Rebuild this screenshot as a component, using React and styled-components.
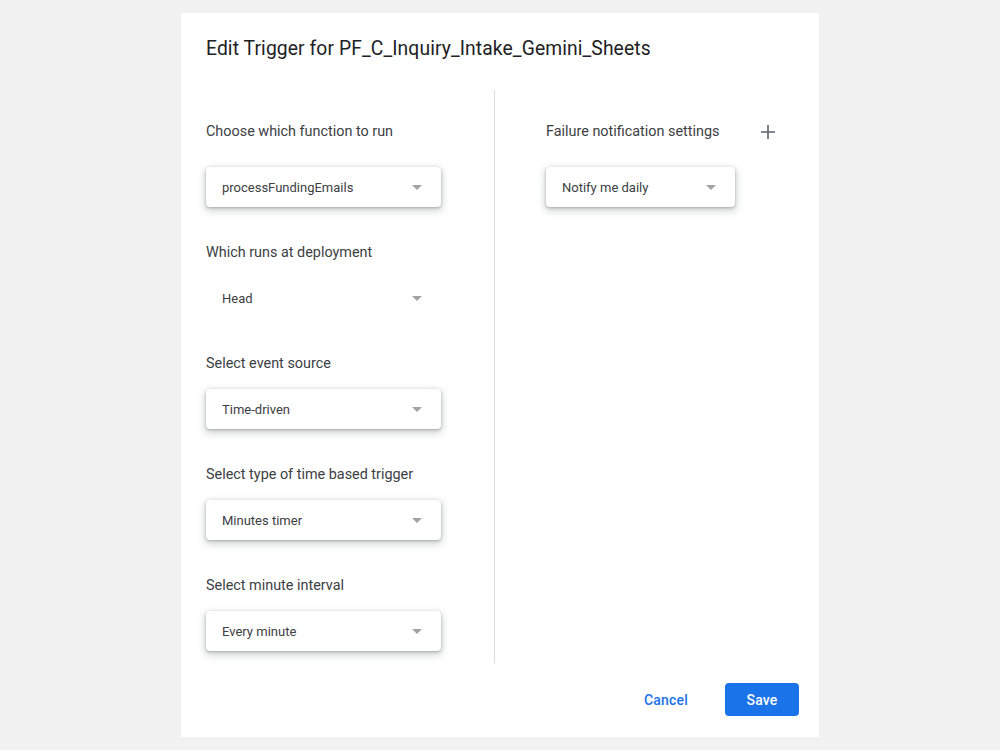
import React from "react";
import styled, { createGlobalStyle } from "styled-components";

const GlobalStyle = createGlobalStyle`
  body {
    margin: 0;
    background: #f1f1f1;
    font-family: Roboto, "Liberation Sans", Arial, sans-serif;
    color: #202124;
  }
`;

const Page = styled.div`
  width: 1000px;
  height: 750px;
  display: flex;
  justify-content: center;
  padding-top: 13px;
  box-sizing: border-box;
`;

const Dialog = styled.div`
  width: 638px;
  height: 724px;
  background: #fff;
  padding: 24px 20px 21px 25px;
  box-sizing: border-box;
  display: flex;
  flex-direction: column;
`;

const Title = styled.h1`
  margin: 0;
  font-size: 19.3px;
  line-height: 24px;
  font-weight: 400;
  color: #202124;
  letter-spacing: 0.1px;
`;

const Body = styled.div`
  display: flex;
  margin-top: 29px;
  height: 573px;
`;

const LeftCol = styled.div`
  width: 289px;
  border-right: 1px solid #dadce0;
  padding-top: 32px;
  box-sizing: border-box;
`;

const RightCol = styled.div`
  flex: 1;
  padding: 32px 23px 0 51px;
`;

const Group = styled.div`
  margin-bottom: 36px;
`;

const LabelRow = styled.div`
  display: flex;
  align-items: center;
  justify-content: space-between;
  height: 20px;
  margin-bottom: ${(p) => p.$gap}px;
`;

const Label = styled.div`
  font-size: 14.4px;
  line-height: 20px;
  color: #3c4043;
`;

const Select = styled.div`
  width: ${(p) => p.$width}px;
  height: 40px;
  box-sizing: border-box;
  border-radius: 4px;
  background: #fff;
  display: flex;
  align-items: center;
  justify-content: space-between;
  padding: 0 19px 0 16px;
  font-size: 13px;
  color: #3c4043;
  box-shadow: ${(p) =>
    p.$flat
      ? "none"
      : "0 1px 3px rgba(60,64,67,0.35), 0 3px 7px 2px rgba(60,64,67,0.18)"};
`;

const Arrow = styled.span`
  width: 0;
  height: 0;
  border-left: 5px solid transparent;
  border-right: 5px solid transparent;
  border-top: 5px solid #a3a3a3;
`;

const PlusButton = styled.button`
  border: none;
  background: none;
  padding: 0;
  width: 16px;
  height: 16px;
  display: flex;
  align-items: center;
  justify-content: center;
  color: #5f6368;
  cursor: pointer;
`;

const Footer = styled.div`
  display: flex;
  justify-content: flex-end;
  align-items: center;
  gap: 21px;
  margin-top: 20px;
`;

const Button = styled.button`
  height: 33px;
  min-width: 74px;
  padding: 0 16px;
  border-radius: 4px;
  border: none;
  font-family: Roboto, "Liberation Sans", Arial, sans-serif;
  font-size: 14px;
  font-weight: 500;
  letter-spacing: 0.2px;
  cursor: pointer;
  background: ${(p) => (p.$primary ? "#1a73e8" : "transparent")};
  color: ${(p) => (p.$primary ? "#fff" : "#1a73e8")};
`;

const groups = [
  { label: "Choose which function to run", value: "processFundingEmails", gap: 25 },
  { label: "Which runs at deployment", value: "Head", gap: 15, flat: true },
  { label: "Select event source", value: "Time-driven", gap: 15 },
  { label: "Select type of time based trigger", value: "Minutes timer", gap: 15 },
  { label: "Select minute interval", value: "Every minute", gap: 15 },
];

const Dropdown = ({ value, width, flat }) => (
  <Select $width={width} $flat={flat}>
    <span>{value}</span>
    <Arrow />
  </Select>
);

export default function App() {
  return (
    <>
      <GlobalStyle />
      <Page>
        <Dialog>
          <Title>Edit Trigger for PF_C_Inquiry_Intake_Gemini_Sheets</Title>
          <Body>
            <LeftCol>
              {groups.map((g) => (
                <Group key={g.label}>
                  <LabelRow $gap={g.gap}>
                    <Label>{g.label}</Label>
                  </LabelRow>
                  <Dropdown value={g.value} width={235} flat={g.flat} />
                </Group>
              ))}
            </LeftCol>
            <RightCol>
              <LabelRow $gap={25}>
                <Label>Failure notification settings</Label>
                <PlusButton aria-label="Add">
                  <svg width="14" height="14" viewBox="0 0 14 14">
                    <path d="M7 0v14M0 7h14" stroke="currentColor" strokeWidth="1.6" />
                  </svg>
                </PlusButton>
              </LabelRow>
              <Dropdown value="Notify me daily" width={189} />
            </RightCol>
          </Body>
          <Footer>
            <Button>Cancel</Button>
            <Button $primary>Save</Button>
          </Footer>
        </Dialog>
      </Page>
    </>
  );
}
